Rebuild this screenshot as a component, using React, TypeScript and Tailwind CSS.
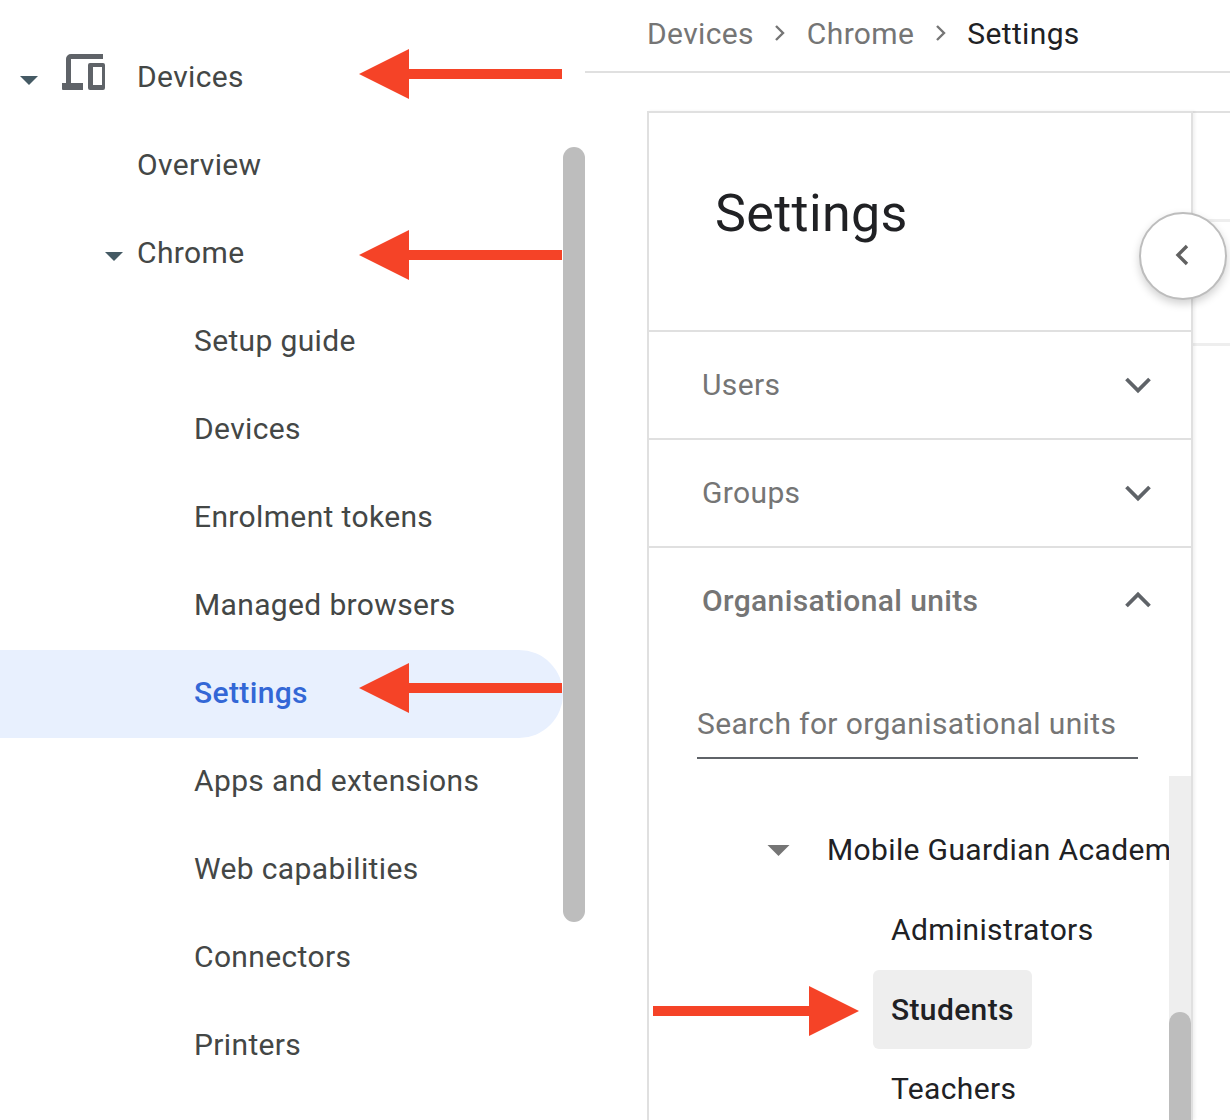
import React from 'react';

const NAV = [
  { label: 'Overview', indent: 'pl-[137px]' },
  { label: 'Chrome', indent: 'pl-[137px]', caret: true },
  { label: 'Setup guide', indent: 'pl-[194px]' },
  { label: 'Devices', indent: 'pl-[194px]' },
  { label: 'Enrolment tokens', indent: 'pl-[194px]' },
  { label: 'Managed browsers', indent: 'pl-[194px]' },
  { label: 'Settings', indent: 'pl-[194px]', active: true },
  { label: 'Apps and extensions', indent: 'pl-[194px]' },
  { label: 'Web capabilities', indent: 'pl-[194px]' },
  { label: 'Connectors', indent: 'pl-[194px]' },
  { label: 'Printers', indent: 'pl-[194px]' },
];

const Caret = ({ className }: { className: string }) => (
  <svg viewBox="0 0 18 9" className={className} fill="currentColor">
    <path d="M0 0h18L9 9z" />
  </svg>
);

const Chevron = ({ up }: { up?: boolean }) => (
  <svg width="28" height="18" viewBox="0 0 28 18" fill="none" stroke="#5f6368" strokeWidth="3.8" className={up ? '' : 'mt-[1px]'}>
    <path d={up ? 'M2.5 15L14 3.5 25.500 15' : 'M2.5 3L14 14.5 25.5 3'} />
  </svg>
);

const LeftArrow = ({ className }: { className: string }) => (
  <svg width="203" height="50" viewBox="0 0 203 50" className={className}>
    <path d="M0 25L50 0v20h153v10H50v20z" fill="#f54327" />
  </svg>
);

export default function App() {
  return (
    <div className="relative flex h-[1120px] w-[1230px] overflow-hidden bg-white font-['Roboto',sans-serif] tracking-[0.36px]">
      {/* side nav */}
      <aside className="flex w-[585px] shrink-0">
        <nav className="w-[563px] shrink-0 pt-[34px] text-[30px] text-[#444746]">
          <div className="relative flex h-[88px] items-center pb-[3px] pl-[137px]">
            <Caret className="absolute left-[20px] top-[42px] h-[9px] w-[18px] text-[#455a64]" />
            <svg viewBox="0 0 43 36" className="absolute left-[62px] top-[20px] h-[36px] w-[43px]" fill="#5f6368">
              <path d="M4 5a5 5 0 0 1 5-5h32v5H9v24h12v7H1a1 1 0 0 1-1-1v-6h4z" />
              <path fillRule="evenodd" d="M28 9h13a2 2 0 0 1 2 2v23a2 2 0 0 1-2 2H28a2 2 0 0 1-2-2V11a2 2 0 0 1 2-2zm3 4v18h9V13z" />
            </svg>
            Devices
          </div>
          {NAV.map((item) => (
            <div
              key={item.label}
              className={`relative flex h-[88px] items-center rounded-r-[44px] pb-[3px] ${item.indent} ${
                item.active ? 'bg-[#e8f0fe] font-medium text-[#3367d6]' : ''
              }`}
            >
              {item.caret && <Caret className="absolute left-[105px] top-[42px] h-[9px] w-[18px] text-[#455a64]" />}
              {item.label}
            </div>
          ))}
        </nav>
        <div className="mt-[147px] h-[775px] w-[22px] rounded-full bg-[#bdbdbd]" />
      </aside>

      {/* main */}
      <main className="min-w-0 flex-1">
        <header className="flex h-[73px] items-center border-b-2 border-[#e0e0e0] pb-[5px] pl-[62px] text-[30px] text-[#757575]">
          <span>Devices</span>
          <svg width="14" height="20" viewBox="0 0 14 20" fill="none" stroke="#757575" strokeWidth="2.4" className="ml-[19px] mr-[20px]">
            <path d="M3 3l7 7-7 7" />
          </svg>
          <span>Chrome</span>
          <svg width="14" height="20" viewBox="0 0 14 20" fill="none" stroke="#757575" strokeWidth="2.4" className="ml-[20px] mr-[19px]">
            <path d="M3 3l7 7-7 7" />
          </svg>
          <span className="text-[#202124]">Settings</span>
        </header>

        <div className="ml-[62px] mt-[38px] flex h-[1009px]">
          <section className="relative w-[546px] shrink-0 border-x-2 border-t-2 border-[#e0e0e0] shadow-[2px_0_3px_rgba(0,0,0,0.06)]">
            <div className="flex h-[219px] items-start border-b-2 border-[#e0e0e0] pl-[66px] pt-[67px] text-[52px] leading-[68px] text-[#202124]">
              Settings
            </div>
            <div className="flex h-[108px] items-center justify-between border-b-2 border-[#e0e0e0] pb-[2px] pl-[53px] pr-[39px] text-[30px] text-[#757575]">
              Users
              <Chevron />
            </div>
            <div className="flex h-[108px] items-center justify-between border-b-2 border-[#e0e0e0] pb-[2px] pl-[53px] pr-[39px] text-[30px] text-[#757575]">
              Groups
              <Chevron />
            </div>
            <div className="flex h-[106px] items-center justify-between pb-[2px] pl-[53px] pr-[39px] text-[30px] font-medium text-[#757575]">
              Organisational units
              <Chevron up />
            </div>
            <div className="ml-[48px] mt-[50px] w-[441px] border-b-2 border-[#5f6368] pb-[13px] text-[30px] leading-[40px] text-[#757575]">
              Search for organisational units
            </div>

            <div className="mt-[17px] flex h-[360px]">
              <div className="w-[520px] shrink-0 overflow-hidden whitespace-nowrap text-[30px] text-[#202124]">
                <div className="relative box-content flex h-[79px] items-center pb-[2px] pl-[178px] pt-[34px]">
                  <Caret className="absolute left-[118px] top-[69px] h-[11px] w-[23px] text-[#757575]" />
                  Mobile Guardian Academy
                </div>
                <div className="flex h-[79px] items-center pb-[2px] pl-[242px]">Administrators</div>
                <div className="ml-[224px] flex h-[79px] w-[159px] items-center rounded-[6px] bg-[#eeeeee] pl-[18px] font-medium">
                  Students
                </div>
                <div className="flex h-[79px] items-center pl-[242px]">Teachers</div>
              </div>
              <div className="flex h-full w-[22px] shrink-0 flex-col bg-[#eeeeee] pt-[236px]">
                <div className="h-[200px] rounded-t-full bg-[#bdbdbd]" />
              </div>
            </div>
          </section>

          <section className="min-w-0 flex-1 border-t-2 border-[#e0e0e0]">
            <div className="h-[106px]" />
            <div className="h-[127px] border-y-[3px] border-[#eeeeee]" />
          </section>
        </div>
      </main>

      {/* collapse button */}
      <button className="absolute left-[1139px] top-[212px] flex h-[88px] w-[88px] items-center justify-center rounded-full border-2 border-[#bdbdbd] bg-white shadow-[0_4px_8px_rgba(0,0,0,0.18)]">
        <svg width="16" height="24" viewBox="0 0 16 24" fill="none" stroke="#616161" strokeWidth="3.4" className="-translate-x-px -translate-y-px">
          <path d="M13 3L4 12l9 9" />
        </svg>
      </button>

      {/* annotation arrows */}
      <LeftArrow className="absolute left-[359px] top-[49px]" />
      <LeftArrow className="absolute left-[359px] top-[230px]" />
      <LeftArrow className="absolute left-[359px] top-[663px]" />
      <svg width="206" height="50" viewBox="0 0 206 50" className="absolute left-[653px] top-[986px]">
        <path d="M206 25L156 0v20H0v10h156v20z" fill="#f54327" />
      </svg>
    </div>
  );
}
